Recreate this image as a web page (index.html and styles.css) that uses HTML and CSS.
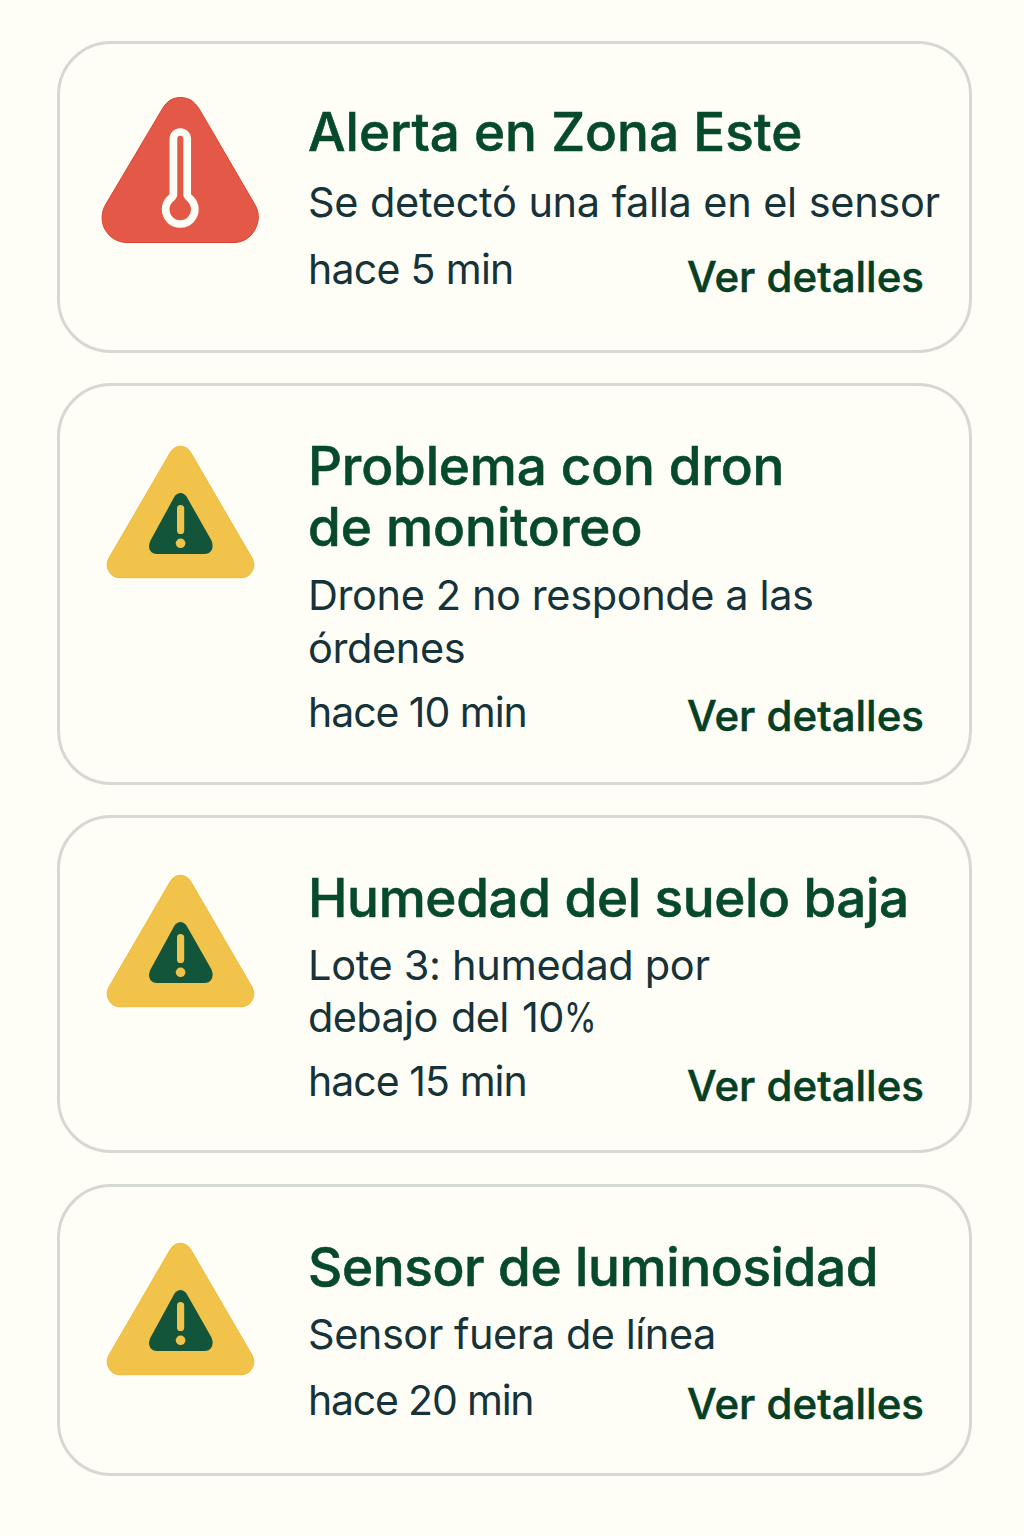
FILE: index.html
```html
<!DOCTYPE html>
<html lang="es">
<head>
<meta charset="utf-8">
<title>Alertas</title>
<link rel="stylesheet" href="styles.css">
</head>
<body>
<svg class="defs" width="0" height="0" aria-hidden="true">
  <symbol id="warning" viewBox="0 0 160 150">
    <path class="tri-yellow" d="M70 17Q74 10.300 80.500 10.300Q87 10.300 91 17L152 122Q155.500 128.500 152.500 134.500Q149 141.700 141 141.700H20Q12 141.700 8.500 134.500Q5.500 128.500 9 122Z"/>
    <path class="tri-green" d="M74.500 60.500Q77 57 80.500 57Q84 57 86.500 60.500L111.500 104.500Q114 111 111 115Q109 118 104.500 118H57Q52.500 118 50.500 115Q47.500 110.500 50.500 104.500Z"/>
    <rect class="mark" x="77" y="69" width="7.200" height="29" rx="3.600"/>
    <circle class="mark" cx="80.600" cy="107.300" r="4.800"/>
  </symbol>
</svg>
<main class="alerts">
  <article class="card card-critical">
    <svg class="icon" viewBox="0 0 160 150" aria-hidden="true">
      <path class="tri-red" d="M62 14.500C66.500 6 73 2.500 80.500 2.500S94.500 6 99.500 14.500L154.500 109C159 116 159.500 125 156 132.500C152 141.500 144 147.500 134 147.500H27C17 147.500 8.500 142 4 132.500C1 125 1.500 116 6 109Z"/>
      <path class="thermo" d="M73.400 100V44A6.900 7 0 0 1 87.200 44V100Q88 102.300 90.500 104A14.600 14.600 0 1 1 70 104Q72.500 102.300 73.400 100Z"/>
    </svg>
    <div class="body">
      <h2 class="title">Alerta en Zona Este</h2>
      <p class="desc"><span class="d1">Se detectó una falla en el sensor</span></p>
      <div class="foot"><span class="time m1">hace 5 min</span><a class="link">Ver detalles</a></div>
    </div>
  </article>
  <article class="card card-drone">
    <svg class="icon" aria-hidden="true"><use href="#warning"/></svg>
    <div class="body">
      <h2 class="title"><span class="t2">Problema con dron</span><br>de monitoreo</h2>
      <p class="desc"><span class="d2">Drone 2 no responde a las<br>órdenes</span></p>
      <div class="foot"><span class="time m2">hace 10 min</span><a class="link">Ver detalles</a></div>
    </div>
  </article>
  <article class="card card-soil">
    <svg class="icon" aria-hidden="true"><use href="#warning"/></svg>
    <div class="body">
      <h2 class="title">Humedad del suelo baja</h2>
      <p class="desc"><span class="d4">Lote 3: humedad por</span><br><span class="d5">debajo del 10<span class="percent">%</span></span></p>
      <div class="foot"><span class="time m3">hace 15 min</span><a class="link">Ver detalles</a></div>
    </div>
  </article>
  <article class="card card-light">
    <svg class="icon" aria-hidden="true"><use href="#warning"/></svg>
    <div class="body">
      <h2 class="title">Sensor de luminosidad</h2>
      <p class="desc"><span class="d6">Sensor fuera de línea</span></p>
      <div class="foot"><span class="time m4">hace 20 min</span><a class="link">Ver detalles</a></div>
    </div>
  </article>
</main>
</body>
</html>
```
FILE: styles.css
```css
* { box-sizing: border-box; }
body {
  margin: 0;
  min-height: 1536px;
  background: #fffef6;
  font-family: Inter, "Liberation Sans", sans-serif;
  color: #16333a;
}
.defs { display: block; }
.alerts {
  display: flex;
  flex-direction: column;
  gap: 31px;
  padding: 41px 52px 0 57px;
}
.card {
  display: flex;
  gap: 48px;
  height: 312px;
  padding: 50px 0 0 40px;
  border: 3px solid #d6d8d2;
  border-radius: 54px;
  white-space: nowrap;
}
.card-critical { padding-top: 51px; }
.card-drone { height: 402px; margin-top: -1px; }
.card-soil { height: 338px; margin-top: -1px; }
.card-light { height: 292px; }
.icon { flex: none; width: 160px; height: 150px; }
.card-soil .icon { margin-top: -3px; }
.card-light .icon { margin-top: -4px; }
.tri-red { fill: #e45847; stroke: #e0402f; }
.tri-yellow { fill: #f2c34b; stroke: #f0b93a; }
.tri-green { fill: #13553a; }
.mark { fill: #f2c34b; }
.thermo { fill: none; stroke: #fffef6; stroke-width: 7.7; }
.body { flex: 1; }
.title {
  margin: 0;
  font-size: 53px;
  line-height: 61px;
  font-weight: 500;
  -webkit-text-stroke: .6px;
  color: #064a2a;
}
.t2 { letter-spacing: -.15px; }
.card-soil .title, .card-light .title { letter-spacing: -.35px; }
.desc {
  margin: 11px 0 0;
  font-size: 41.5px;
  line-height: 53px;
}
.foot {
  display: flex;
  justify-content: space-between;
  align-items: flex-start;
  margin-top: 11px;
  padding-right: 45px;
  line-height: 53px;
}
.time { font-size: 41px; }
.link { margin-top: 3px; font-size: 42px; font-weight: 500; -webkit-text-stroke: .5px; color: #063f24; }
.d1 { letter-spacing: -.32px; word-spacing: .5px; }
.d2 { letter-spacing: -.4px; }
.d4 { letter-spacing: -.33px; }
.d5 { letter-spacing: -.65px; word-spacing: 2.2px; }
.percent { display: inline-block; transform: scaleX(.8); transform-origin: left; }
.d6 { letter-spacing: -.48px; }
.m1 { letter-spacing: -.7px; }
.m2 { letter-spacing: -1.05px; }
.m3 { letter-spacing: -.95px; }
.m4 { letter-spacing: -1.2px; }
.card-critical .body { padding-top: 7px; }
.card-critical .desc { margin-top: 13px; }
.card-critical .foot { margin-top: 14px; }
.card-critical .link { margin-top: 7px; }
.card-soil .desc { margin-top: 10px; line-height: 52px; }
.card-soil .foot { margin-top: 12px; }
.card-soil .link { margin-top: 4px; }
.card-light .desc { margin-top: 10px; }
.card-light .foot { margin-top: 13px; }
```
